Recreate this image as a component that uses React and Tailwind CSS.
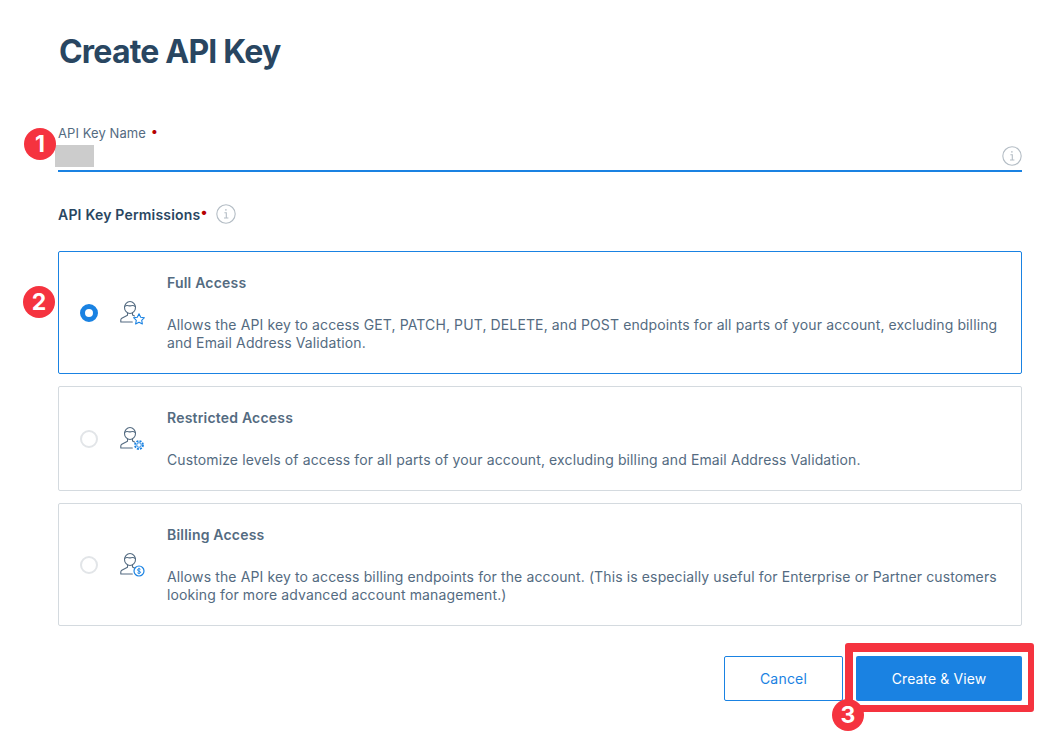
import React from "react";

function InfoIcon({ className }) {
  return (
    <svg viewBox="0 0 20 20" className={className} fill="none" stroke="#b4bdc5" strokeWidth="1.1">
      <circle cx="10" cy="10" r="9.200" />
      <path d="M8.400 8.800h1.900v5M8 14h4.400" />
      <circle cx="9.900" cy="5.900" r="0.800" fill="#b4bdc5" stroke="none" />
    </svg>
  );
}

function UserIcon({ type }) {
  return (
    <svg viewBox="0 0 26 26" className="w-[26px] h-[26px]" fill="none">
      <g stroke="#546b81" strokeWidth="1.100" strokeLinecap="round" strokeLinejoin="round">
        <ellipse cx="11" cy="7.500" rx="5.500" ry="6" />
        <path d="M5.700 6.500c2-2.200 3.800-.4 5.300-.6 1.500-.2 3.300-1.300 5.300.6" />
        <path d="M8.500 13v2.200L2.800 18.300c-.8.5-1 1-1 1.700v2h11.500" />
        <path d="M13.500 13v2l2 1" />
      </g>
      {type === "star" && (
        <path d="M20 13.800l1.700 3.400 3.700.5-2.700 2.600.7 3.700-3.400-1.800-3.400 1.800.7-3.700-2.700-2.600 3.700-.5z" stroke="#1a82e2" strokeWidth="1.100" strokeLinejoin="round" />
      )}
      {type === "gear" && (
        <g stroke="#1a82e2">
          <circle cx="20" cy="19" r="4" strokeWidth="1.800" strokeDasharray="2 1.150" />
          <circle cx="20" cy="19" r="2.300" strokeWidth="0.900" />
        </g>
      )}
      {type === "dollar" && (
        <g stroke="#1a82e2">
          <circle cx="20" cy="19" r="5" strokeWidth="1.200" />
          <path d="M21.500 17.300c-.8-.9-3-.8-3 .7 0 1.600 3.100.8 3.100 2.200 0 1.400-2.300 1.500-3.200.6M20 15.800v6.400" strokeWidth="0.900" />
        </g>
      )}
    </svg>
  );
}

function Step({ n, className }) {
  return (
    <div className={`absolute w-8 h-8 rounded-full bg-[#f5333f] text-white text-[23px] font-bold flex items-center justify-center ${className}`}>
      {n}
    </div>
  );
}

const options = [
  {
    title: "Full Access",
    icon: "star",
    selected: true,
    height: "h-[123px]",
    text: "Allows the API key to access GET, PATCH, PUT, DELETE, and POST endpoints for all parts of your account, excluding billing and Email Address Validation.",
  },
  {
    title: "Restricted Access",
    icon: "gear",
    height: "h-[105px]",
    text: "Customize levels of access for all parts of your account, excluding billing and Email Address Validation.",
  },
  {
    title: "Billing Access",
    icon: "dollar",
    height: "h-[123px]",
    text: "Allows the API key to access billing endpoints for the account. (This is especially useful for Enterprise or Partner customers looking for more advanced account management.)",
  },
];

export default function App() {
  return (
    <div className="relative w-[1060px] h-[732px] overflow-hidden bg-white pl-[58px] pt-[30px] font-['Inter',sans-serif] text-[#546b81]">
      <h1 className="text-[32px] leading-[44px] font-bold text-[#294661] tracking-[-0.8px] ml-px">Create API Key</h1>

      {/* name field */}
      <div className="w-[964px] mt-[51px] h-[47px] border-b-2 border-[#1a82e2] relative">
        <div className="text-[13px] leading-4 tracking-[0.08px]">
          API Key Name <span className="text-[#b60000] relative bottom-[2px] ml-[1px]">•</span>
        </div>
        <InfoIcon className="absolute right-0 bottom-[4px] w-5 h-5" />
      </div>

      <div className="flex items-center mt-[32px] h-5 text-[14px] font-semibold text-[#294661] tracking-[0.2px]">
        API Key Permissions<span className="text-[#b60000] relative bottom-[3px]">•</span>
        <InfoIcon className="ml-[8px] w-5 h-5" />
      </div>

      <div className="w-[964px] mt-[27px] flex flex-col gap-3">
        {options.map((o) => (
          <div
            key={o.title}
            className={`flex items-center rounded-[2px] border ${o.height} ${o.selected ? "border-[#1a82e2]" : "border-[#d4dadf]"}`}
          >
            <div className="w-[108px] shrink-0 flex items-center pl-[21px]">
              {o.selected ? (
                <div className="w-[18px] h-[18px] rounded-full border-[5px] border-[#1a82e2] bg-white" />
              ) : (
                <div className="w-[18px] h-[18px] rounded-full border-2 border-[#e2e5e8]" />
              )}
              <div className="ml-[21px] mt-[1px]">
                <UserIcon type={o.icon} />
              </div>
            </div>
            <div className="pr-5">
              <div className="text-[14px] leading-5 font-semibold tracking-[0.2px]">{o.title}</div>
              <p className="mt-[23px] text-[14px] leading-[18px] tracking-[0.12px]">{o.text}</p>
            </div>
          </div>
        ))}
      </div>

      {/* actions */}
      <div className="w-[964px] mt-[30px] flex justify-end gap-[13px]">
        <button className="w-[119px] h-[45px] rounded-[2px] border border-[#1a82e2] text-[14px] tracking-[0.2px] text-[#1a82e2]">Cancel</button>
        <button className="w-[166px] h-[45px] rounded-[2px] bg-[#1a82e2] text-[14px] tracking-[0.1px] text-white">Create &amp; View</button>
      </div>

      {/* annotations over the shot */}
      <div className="absolute left-[55px] top-[145px] w-[39px] h-[22px] bg-[#cccccc]" />
      <div className="absolute left-[845px] top-[643px] w-[189px] h-[69px] border-solid border-t-[9px] border-r-[6px] border-b-[7px] border-l-[8px] border-[#f5333f] rounded-[3px]" />
      <Step n="1" className="left-[24px] top-[128px]" />
      <Step n="2" className="left-[23px] top-[286px]" />
      <Step n="3" className="left-[832px] top-[699px]" />
    </div>
  );
}
